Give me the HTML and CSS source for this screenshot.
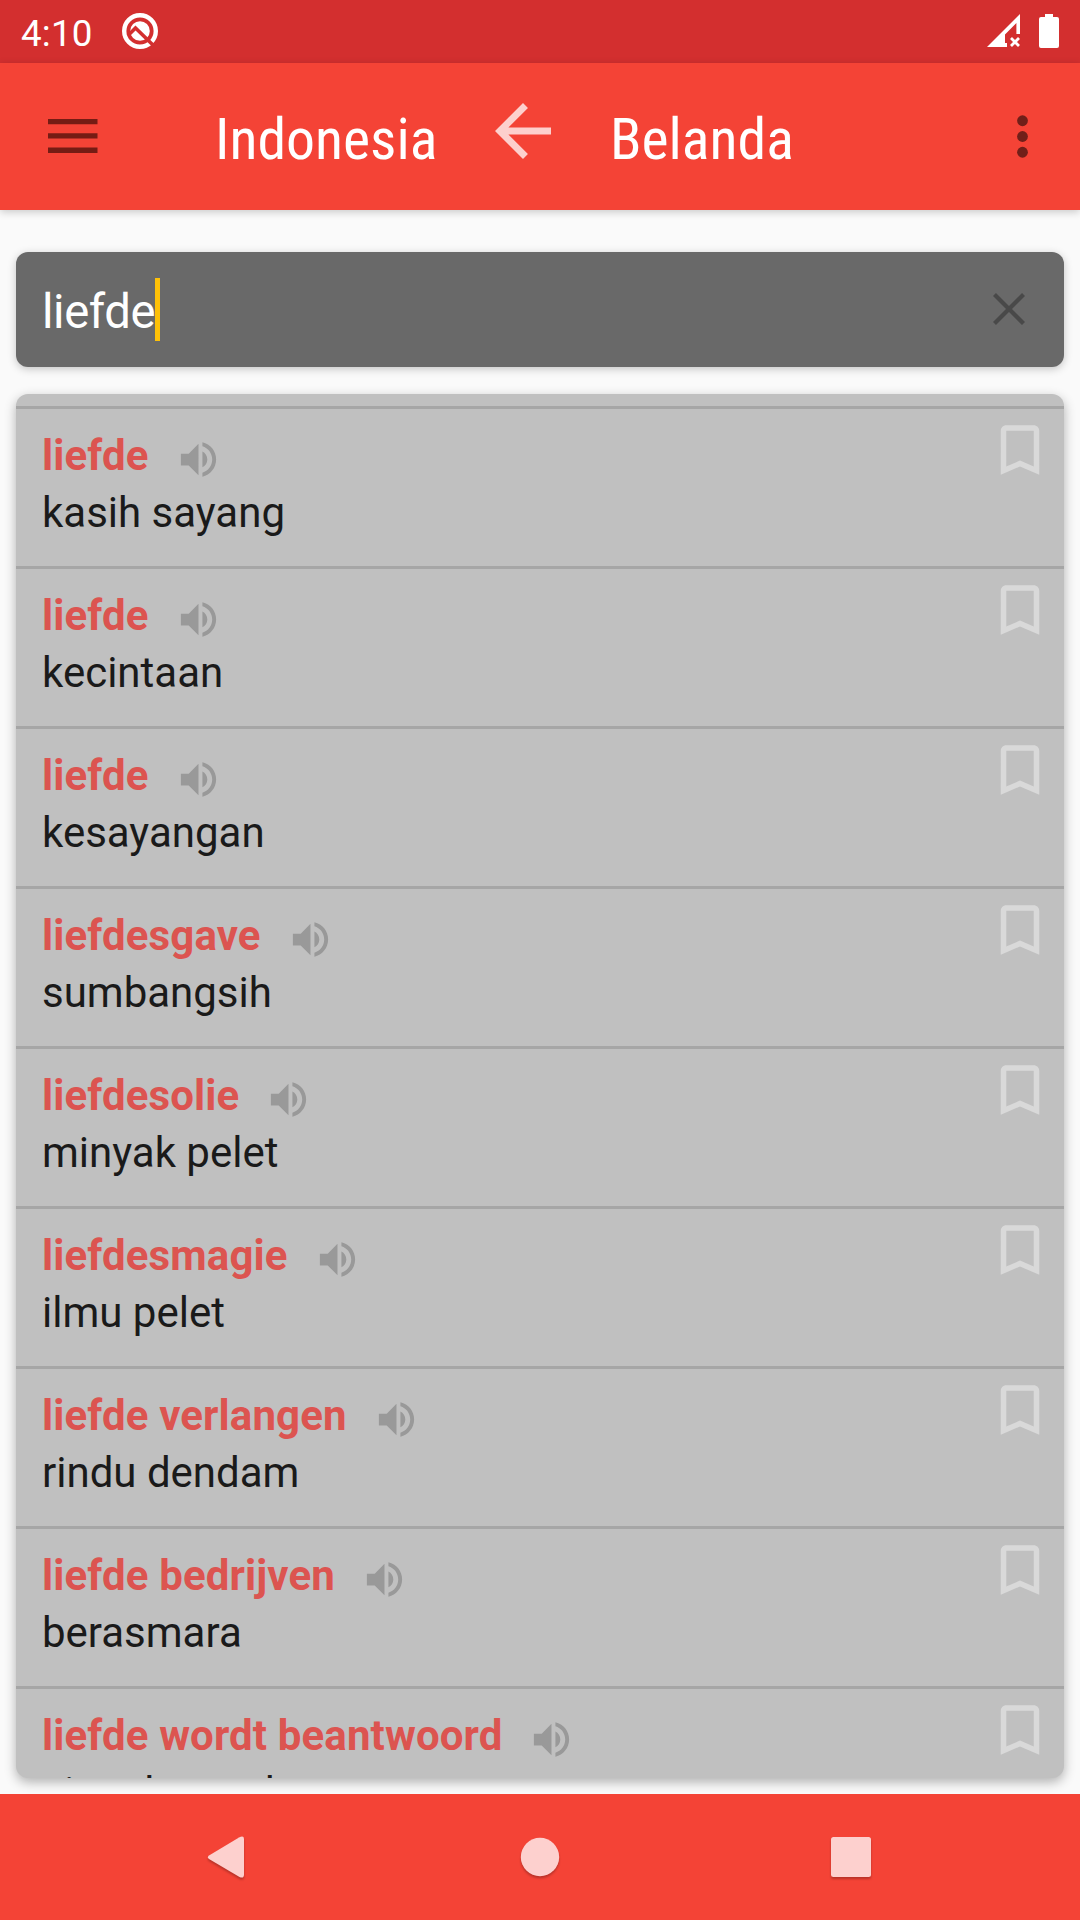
FILE: index.html
```html
<!DOCTYPE html>
<html lang="id">
<head>
<meta charset="utf-8">
<title>Kamus Indonesia Belanda</title>
<link rel="stylesheet" href="styles.css">
</head>
<body>
<svg class="defs" width="0" height="0">
  <symbol id="speaker" viewBox="0 0 24 24"><path d="M3 9v6h4l5 5V4L7 9H3zm13.5 3c0-1.77-1.02-3.29-2.5-4.03v8.05c1.48-.73 2.5-2.25 2.5-4.02zM14 3.23v2.06c2.89.86 5 3.54 5 6.71s-2.11 5.85-5 6.71v2.06c4.01-.91 7-4.49 7-8.77s-2.99-7.86-7-8.77z"/></symbol>
  <symbol id="bookmark" viewBox="0 0 24 24"><path d="M17 3H7c-1.1 0-1.99.9-1.99 2L5 21l7-3 7 3V5c0-1.1-.9-2-2-2zm0 15l-5-2.18L7 18V5h10v13z"/></symbol>
</svg>
<header class="status">
  <span class="clock">4:10</span>
  <svg class="q" viewBox="0 0 38 38"><circle cx="19" cy="19" r="15.8" fill="none" stroke="#fff" stroke-width="4.4"/><circle cx="19" cy="19" r="9.8" fill="#fff"/><path d="M7 23.500l7.500-7.500L33 34" fill="none" stroke="#d32f2f" stroke-width="3.600"/></svg>
  <span class="grow"></span>
  <svg class="signal" viewBox="0 0 34 34"><path d="M0 33L33 0v20h-3.600V9L18 20.500v8.500h2v4z" fill="#fff"/><path d="M24 24l8 8M32 24l-8 8" stroke="#fff" stroke-width="2.800"/></svg>
  <svg class="battery" viewBox="0 0 20 34"><path d="M6 0h8v3h4q2 0 2 2v27q0 2-2 2H2q-2 0-2-2V5q0-2 2-2h4z" fill="#fff"/></svg>
</header>
<nav class="appbar">
  <svg class="menu" viewBox="0 0 50 35"><path d="M0 0h49.500v5.300H0zM0 14.300h49.500v5.300H0zM0 28.600h49.500v5.300H0z"/></svg>
  <span class="lang from">Indonesia</span>
  <svg class="swap" viewBox="0 0 24 24"><path d="M20 11H7.830l5.590-5.590L12 4l-8 8 8 8 1.410-1.410L7.830 13H20v-2z"/></svg>
  <span class="lang to">Belanda</span>
  <span class="grow"></span>
  <svg class="more" viewBox="0 0 24 24"><circle cx="12" cy="6" r="2.050"/><circle cx="12" cy="12" r="2.050"/><circle cx="12" cy="18" r="2.050"/></svg>
</nav>
<main class="content">
  <div class="search"><span class="query">liefde</span><span class="caret"></span><span class="grow"></span><svg class="clear" viewBox="0 0 32 32"><path d="M1.500 1.500l29 29M30.500 1.500l-29 29"/></svg></div>
  <section class="list">
    <article class="entry"><div class="head"><b class="word">liefde</b><svg class="speak"><use href="#speaker"/></svg></div><p class="meaning">kasih sayang</p><svg class="mark"><use href="#bookmark"/></svg></article>
    <article class="entry"><div class="head"><b class="word">liefde</b><svg class="speak"><use href="#speaker"/></svg></div><p class="meaning">kecintaan</p><svg class="mark"><use href="#bookmark"/></svg></article>
    <article class="entry"><div class="head"><b class="word">liefde</b><svg class="speak"><use href="#speaker"/></svg></div><p class="meaning">kesayangan</p><svg class="mark"><use href="#bookmark"/></svg></article>
    <article class="entry"><div class="head"><b class="word">liefdesgave</b><svg class="speak"><use href="#speaker"/></svg></div><p class="meaning">sumbangsih</p><svg class="mark"><use href="#bookmark"/></svg></article>
    <article class="entry"><div class="head"><b class="word">liefdesolie</b><svg class="speak"><use href="#speaker"/></svg></div><p class="meaning">minyak pelet</p><svg class="mark"><use href="#bookmark"/></svg></article>
    <article class="entry"><div class="head"><b class="word">liefdesmagie</b><svg class="speak"><use href="#speaker"/></svg></div><p class="meaning">ilmu pelet</p><svg class="mark"><use href="#bookmark"/></svg></article>
    <article class="entry"><div class="head"><b class="word">liefde verlangen</b><svg class="speak"><use href="#speaker"/></svg></div><p class="meaning">rindu dendam</p><svg class="mark"><use href="#bookmark"/></svg></article>
    <article class="entry"><div class="head"><b class="word">liefde bedrijven</b><svg class="speak"><use href="#speaker"/></svg></div><p class="meaning">berasmara</p><svg class="mark"><use href="#bookmark"/></svg></article>
    <article class="entry"><div class="head"><b class="word">liefde wordt beantwoord</b><svg class="speak"><use href="#speaker"/></svg></div><p class="meaning">cinta berpadu</p><svg class="mark"><use href="#bookmark"/></svg></article>
  </section>
</main>
<footer class="navbar">
  <svg class="key" viewBox="0 0 48 48"><path d="M4 22.500L34 4.500Q39 2 39 6v35.500Q39 46 34.500 44L4 26Q1.500 24.300 4 22.500z"/></svg>
  <svg class="key" viewBox="0 0 48 48"><circle cx="24" cy="24" r="19.200"/></svg>
  <svg class="key" viewBox="0 0 48 48"><rect x="4" y="4" width="40" height="40" rx="2.500"/></svg>
</footer>
</body>
</html>
```
FILE: styles.css
```css
* { box-sizing: border-box; }
body { margin: 0; width: 1080px; height: 1920px; overflow: hidden; display: flex; flex-direction: column; background: #fafafa; font-family: Roboto, sans-serif; }
svg { display: block; flex: none; }
.defs { position: absolute; }
.grow { flex: 1; }
.status { height: 63px; flex: none; display: flex; align-items: flex-start; background: #d32f2f; color: #fff; padding: 0 21px 0 21px; }
.clock { width: 100px; font-size: 36.75px; line-height: 44px; padding-top: 12px; letter-spacing: .2px; }
.q { width: 38px; height: 38px; margin-top: 12px; }
.signal { width: 34px; height: 34px; margin: 14px 18px 0 0; }
.battery { width: 20px; height: 34px; margin-top: 14px; }
.appbar { height: 147px; flex: none; display: flex; align-items: flex-start; background: #f44336; padding: 0 26px 0 48px; box-shadow: 0 2px 8px rgba(0,0,0,.2); }
.menu { width: 50px; height: 35px; margin-top: 56px; fill: #751c14; }
.lang { font-family: "Roboto Condensed", Roboto, sans-serif; font-stretch: 75%; color: #fff; font-size: 57.75px; line-height: 68px; margin-top: 42px; white-space: nowrap; }
.from { width: 266px; margin-left: 117px; }
.swap { width: 84px; height: 84px; margin-top: 26px; fill: #fdd0cd; }
.to { margin-left: 45px; }
.more { width: 63px; height: 63px; margin-top: 42px; fill: #701f19; }
.content { flex: 1; min-height: 0; padding: 42px 16px 16px; display: flex; flex-direction: column; gap: 27px; }
.search { height: 115px; flex: none; display: flex; align-items: flex-start; padding: 0 39px 0 26px; border-radius: 12px; background: #696969; color: #fff; box-shadow: 0 2px 8px rgba(0,0,0,.22); }
.query { font-size: 47.25px; line-height: 56px; padding-top: 32px; width: 113px; letter-spacing: -.4px; }
.caret { width: 5px; height: 63px; margin-top: 26px; background: #ffc107; }
.clear { width: 32px; height: 32px; margin-top: 41px; stroke: #494949; stroke-width: 4.2; fill: none; }
.list { flex: 1; min-height: 0; overflow: hidden; padding-top: 12px; border-radius: 12px; background: #c0c0c0; box-shadow: 0 4px 12px rgba(0,0,0,.3); }
.entry { height: 160px; position: relative; border-top: 3px solid #a6a6a6; padding: 22px 26px 0; }
.head { display: flex; height: 57px; }
.word { font-size: 42px; line-height: 50px; color: #dc5450; font-weight: 700; letter-spacing: .13px; }
.speak { width: 47px; height: 47px; margin: 5px 0 0 26px; fill: #999; }
.meaning { margin: 0; font-size: 42px; line-height: 50px; color: #1a1a1a; }
.mark { position: absolute; right: 11px; top: 7.5px; width: 66px; height: 66px; fill: #d9d9d9; }
.navbar { height: 126px; flex: none; display: flex; align-items: center; justify-content: center; gap: 263px; background: #f44336; }
.key { width: 48px; height: 48px; fill: #fdd0ce; filter: drop-shadow(0 2px 1px rgba(0,0,0,.25)); }
```
